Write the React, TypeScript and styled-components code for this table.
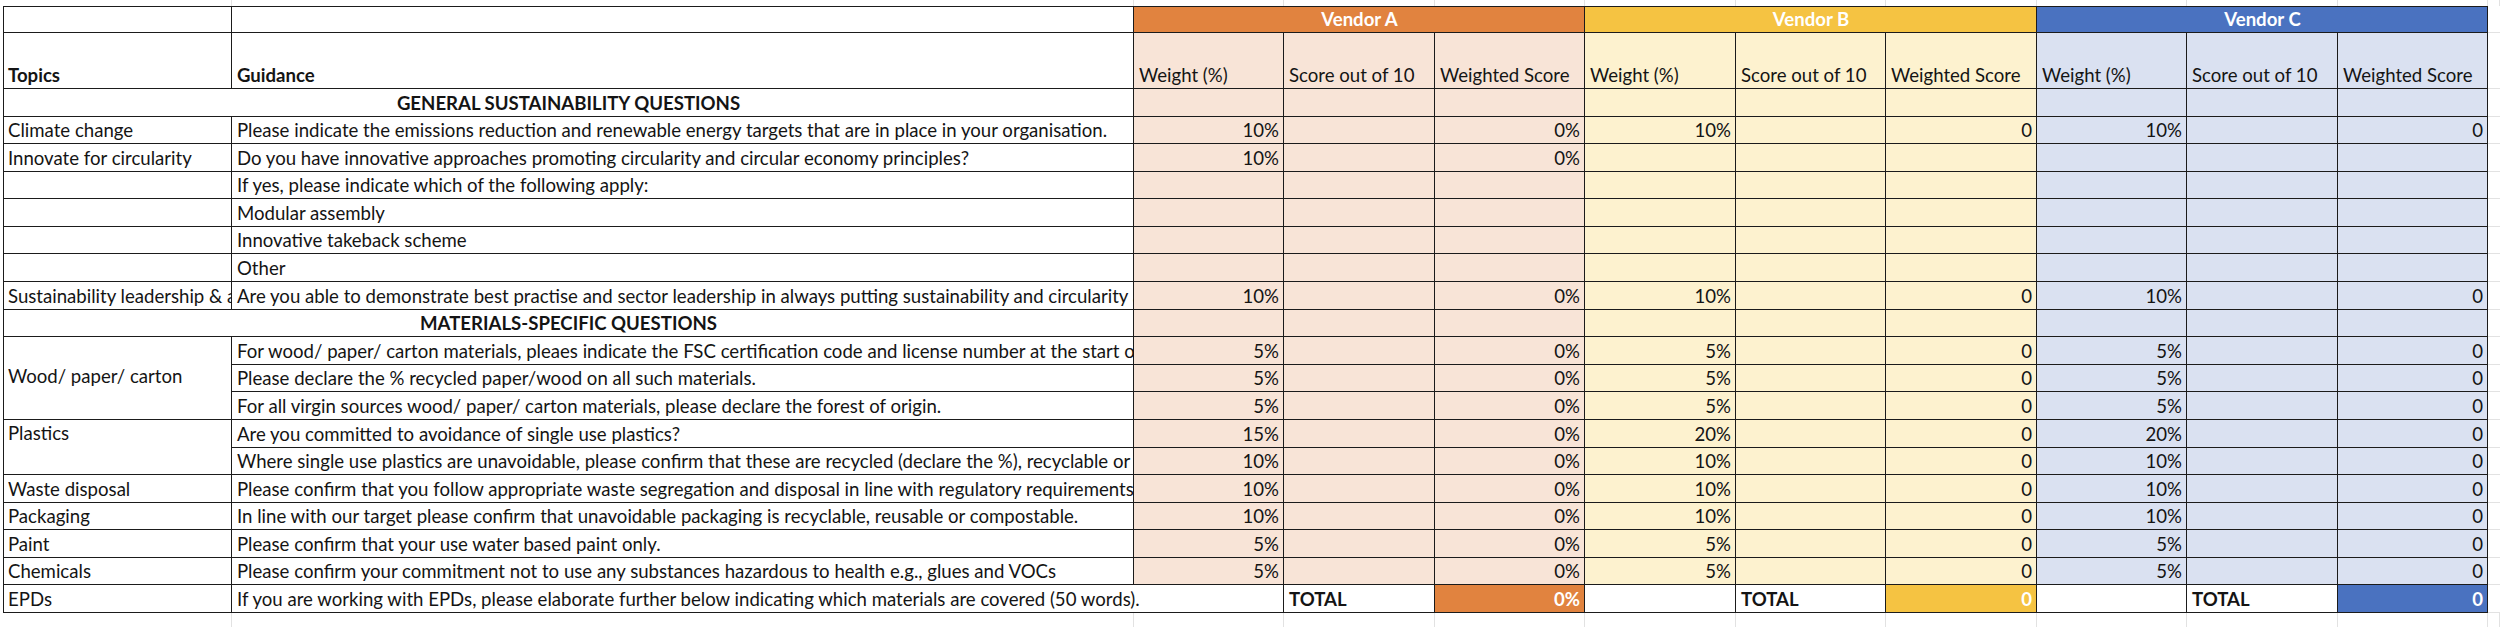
import React from "react";
import styled, { createGlobalStyle } from "styled-components";

const LINE = "#1b1b1b";
const GRID = "#e2e2e2";

const colWidths = [229, 902, 150, 151, 150, 151, 150, 151, 150, 151, 150, 12];
const bodyHeights = Array.from(
  { length: 19 },
  (_, i) => Math.round(((i + 1) * 524) / 19) - Math.round((i * 524) / 19)
);
const rowHeights = [6, 27, 56, ...bodyHeights, 14];

type Vendor = { name: string; strong: string; soft: string; zero: string };

const vendors: Vendor[] = [
  { name: "Vendor A", strong: "#E1833F", soft: "#F8E4D7", zero: "0%" },
  { name: "Vendor B", strong: "#F5C342", soft: "#FDF2CF", zero: "0" },
  { name: "Vendor C", strong: "#4A72C0", soft: "#DAE1F1", zero: "0" },
];

type Row =
  | { section: string }
  | {
      topic?: string;
      topicRows?: number;
      topicAlign?: "top" | "center";
      covered?: boolean;
      guidance: string;
      w: [string, string, string];
    };

const ten: [string, string, string] = ["10%", "10%", "10%"];
const five: [string, string, string] = ["5%", "5%", "5%"];
const none: [string, string, string] = ["", "", ""];

const rows: Row[] = [
  { section: "GENERAL SUSTAINABILITY QUESTIONS" },
  {
    topic: "Climate change",
    guidance:
      "Please indicate the emissions reduction and renewable energy targets that are in place in your organisation.",
    w: ten,
  },
  {
    topic: "Innovate for circularity",
    guidance:
      "Do you have innovative approaches promoting circularity and circular economy principles?",
    w: ["10%", "", ""],
  },
  { topic: "", guidance: "If yes, please indicate which of the following apply:", w: none },
  { topic: "", guidance: "Modular assembly", w: none },
  { topic: "", guidance: "Innovative takeback scheme", w: none },
  { topic: "", guidance: "Other", w: none },
  {
    topic: "Sustainability leadership & accountability",
    guidance:
      "Are you able to demonstrate best practise and sector leadership in always putting sustainability and circularity at the heart of your business?",
    w: ten,
  },
  { section: "MATERIALS-SPECIFIC QUESTIONS" },
  {
    topic: "Wood/ paper/ carton",
    topicRows: 3,
    topicAlign: "center",
    guidance:
      "For wood/ paper/ carton materials, pleaes indicate the FSC certification code and license number at the start of the contract.",
    w: five,
  },
  {
    covered: true,
    guidance: "Please declare the % recycled paper/wood on all such materials.",
    w: five,
  },
  {
    covered: true,
    guidance:
      "For all virgin sources wood/ paper/ carton materials, please declare the forest of origin.",
    w: five,
  },
  {
    topic: "Plastics",
    topicRows: 2,
    topicAlign: "top",
    guidance: "Are you committed to avoidance of single use plastics?",
    w: ["15%", "20%", "20%"],
  },
  {
    covered: true,
    guidance:
      "Where single use plastics are unavoidable, please confirm that these are recycled (declare the %), recyclable or biodegradable.",
    w: ten,
  },
  {
    topic: "Waste disposal",
    guidance:
      "Please confirm that you follow appropriate waste segregation and disposal in line with regulatory requirements.",
    w: ten,
  },
  {
    topic: "Packaging",
    guidance:
      "In line with our target please confirm that unavoidable packaging is recyclable, reusable or compostable.",
    w: ten,
  },
  {
    topic: "Paint",
    guidance: "Please confirm that your use water based paint only.",
    w: five,
  },
  {
    topic: "Chemicals",
    guidance:
      "Please confirm your commitment not to use any substances hazardous to health e.g., glues and VOCs",
    w: five,
  },
];

const App = () => {
  return (
    <>
      <GlobalStyle />
      <Sheet>
        {colWidths.map((_, i) => (
          <GhostTop key={"gt" + i} />
        ))}

        <Cell $left $top />
        <Cell $top />
        {vendors.map((v) => (
          <VendorHead key={v.name} $bg={v.strong} $top>
            {v.name}
          </VendorHead>
        ))}
        <GhostSide />

        <Cell $left $bold>
          Topics
        </Cell>
        <Cell $bold>Guidance</Cell>
        {vendors.map((v) => (
          <React.Fragment key={v.name + "sub"}>
            <Cell $bg={v.soft}>Weight (%)</Cell>
            <Cell $bg={v.soft}>Score out of 10</Cell>
            <Cell $bg={v.soft}>Weighted Score</Cell>
          </React.Fragment>
        ))}
        <GhostSide />

        {rows.map((r, i) => (
          <React.Fragment key={"r" + i}>
            {"section" in r ? (
              <SectionCell $left>{r.section}</SectionCell>
            ) : (
              <>
                {!r.covered && (
                  <TopicCell $left $rows={r.topicRows} $v={r.topicAlign}>
                    {r.topic}
                  </TopicCell>
                )}
                <Cell>{r.guidance}</Cell>
              </>
            )}
            {vendors.map((v, k) => {
              const w = "section" in r ? "" : r.w[k];
              return (
                <React.Fragment key={v.name + i}>
                  <NumCell $bg={v.soft}>{w}</NumCell>
                  <NumCell $bg={v.soft} />
                  <NumCell $bg={v.soft}>{w ? v.zero : ""}</NumCell>
                </React.Fragment>
              );
            })}
            <GhostSide />
          </React.Fragment>
        ))}

        <Cell $left>EPDs</Cell>
        <Cell $span={2}>
          If you are working with EPDs, please elaborate further below indicating which
          materials are covered (50 words).
        </Cell>
        {vendors.map((v, k) => (
          <React.Fragment key={v.name + "total"}>
            {k > 0 && <Cell />}
            <Cell $bold>TOTAL</Cell>
            <TotalValue $bg={v.strong}>{v.zero}</TotalValue>
          </React.Fragment>
        ))}
        <GhostSide />

        {colWidths.map((_, i) => (
          <GhostBottom key={"gb" + i} />
        ))}
      </Sheet>
    </>
  );
};

export default App;

const GlobalStyle = createGlobalStyle`
  html, body {
    margin: 0;
    padding: 0;
    background: #ffffff;
  }
  body {
    font-family: Lato, "Open Sans", "Liberation Sans", sans-serif;
    color: #141414;
  }
`;

const Sheet = styled.div`
  display: grid;
  grid-template-columns: ${colWidths.map((w) => w + "px").join(" ")};
  grid-template-rows: ${rowHeights.map((h) => h + "px").join(" ")};
  width: max-content;
  padding-left: 3px;
  font-size: 18.6px;
  line-height: 1.15;
`;

type CellProps = {
  $bg?: string;
  $bold?: boolean;
  $span?: number;
  $rows?: number;
  $v?: "top" | "center";
  $left?: boolean;
  $top?: boolean;
};

const Cell = styled.div<CellProps>`
  grid-column: span ${(p) => p.$span ?? 1};
  grid-row: span ${(p) => p.$rows ?? 1};
  display: flex;
  align-items: ${(p) =>
    p.$v === "top" ? "flex-start" : p.$v === "center" ? "center" : "flex-end"};
  justify-content: flex-start;
  padding: ${(p) => (p.$v === "top" ? "3px 5px 0" : "0 5px 3px")};
  min-width: 0;
  overflow: hidden;
  white-space: nowrap;
  background: ${(p) => p.$bg ?? "#ffffff"};
  font-weight: ${(p) => (p.$bold ? 700 : 400)};
  box-shadow: inset -1px -1px 0 ${LINE}
    ${(p) => (p.$left ? `, inset 1px 0 0 ${LINE}` : "")}
    ${(p) => (p.$top ? `, inset 0 1px 0 ${LINE}` : "")};
`;

const TopicCell = styled(Cell)``;

const NumCell = styled(Cell)`
  justify-content: flex-end;
`;

const SectionCell = styled(Cell)`
  grid-column: span 2;
  justify-content: center;
  font-weight: 700;
`;

const VendorHead = styled(Cell)`
  grid-column: span 3;
  justify-content: center;
  color: #ffffff;
  font-weight: 700;
`;

const TotalValue = styled(Cell)`
  justify-content: flex-end;
  color: #ffffff;
  font-weight: 700;
`;

const GhostTop = styled.div`
  box-shadow: inset -1px 0 0 ${GRID};
`;

const GhostBottom = styled.div`
  box-shadow: inset -1px 0 0 ${GRID};
`;

const GhostSide = styled.div`
  box-shadow: inset 0 -1px 0 ${GRID};
`;
